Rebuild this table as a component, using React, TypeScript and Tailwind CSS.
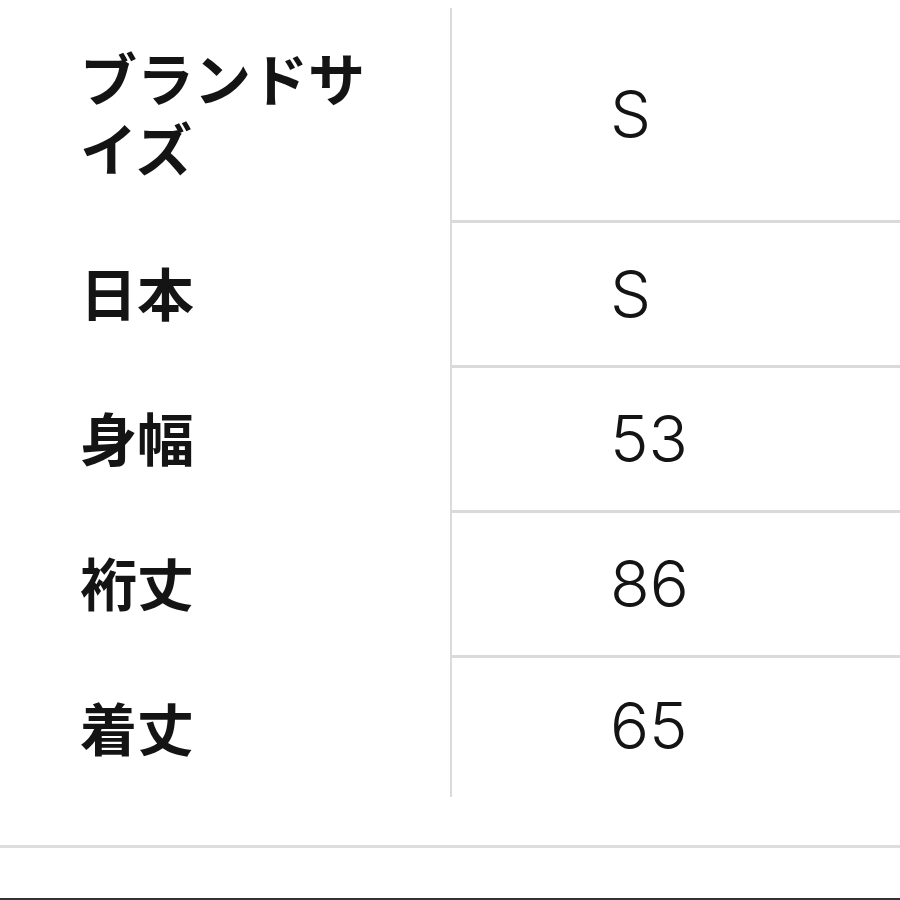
const rows = [
  { label: ["ブランドサ", "イズ"], value: "S" },
  { label: ["日本"], value: "S" },
  { label: ["身幅"], value: "53" },
  { label: ["裄丈"], value: "86" },
  { label: ["着丈"], value: "65" },
];

export default function App() {
  return (
    <main className="w-[900px] h-[900px] bg-white flex flex-col overflow-hidden text-[#141414]">
      <div className="pt-[8px] grid grid-cols-[450px_1fr]">
        {rows.map((r, i) => {
          const last = i === rows.length - 1;
          return (
            <div key={i} className="contents">
              <div
                className={`pl-[80px] pt-[33px] text-[57px] leading-[70px] font-bold ${
                  last ? "pb-[36px]" : "pb-[42px]"
                }`}
                style={{ fontFamily: '"Noto Sans CJK JP", sans-serif' }}
              >
                {r.label.map((l) => (
                  <div key={l}>{l}</div>
                ))}
              </div>
              <div
                className={`border-l-2 border-[#dadada] pl-[158px] flex items-center text-[65px] leading-[70px] font-light ${
                  last ? "pb-[4px]" : "border-b-[3px]"
                }`}
                style={{ fontFamily: 'Inter, "Liberation Sans", sans-serif' }}
              >
                {r.value}
              </div>
            </div>
          );
        })}
      </div>
      <div className="mt-[48px] h-[3px] bg-[#dedede]" />
      <div className="flex-1" />
      <div className="h-[2px] bg-[#333]" />
    </main>
  );
}
